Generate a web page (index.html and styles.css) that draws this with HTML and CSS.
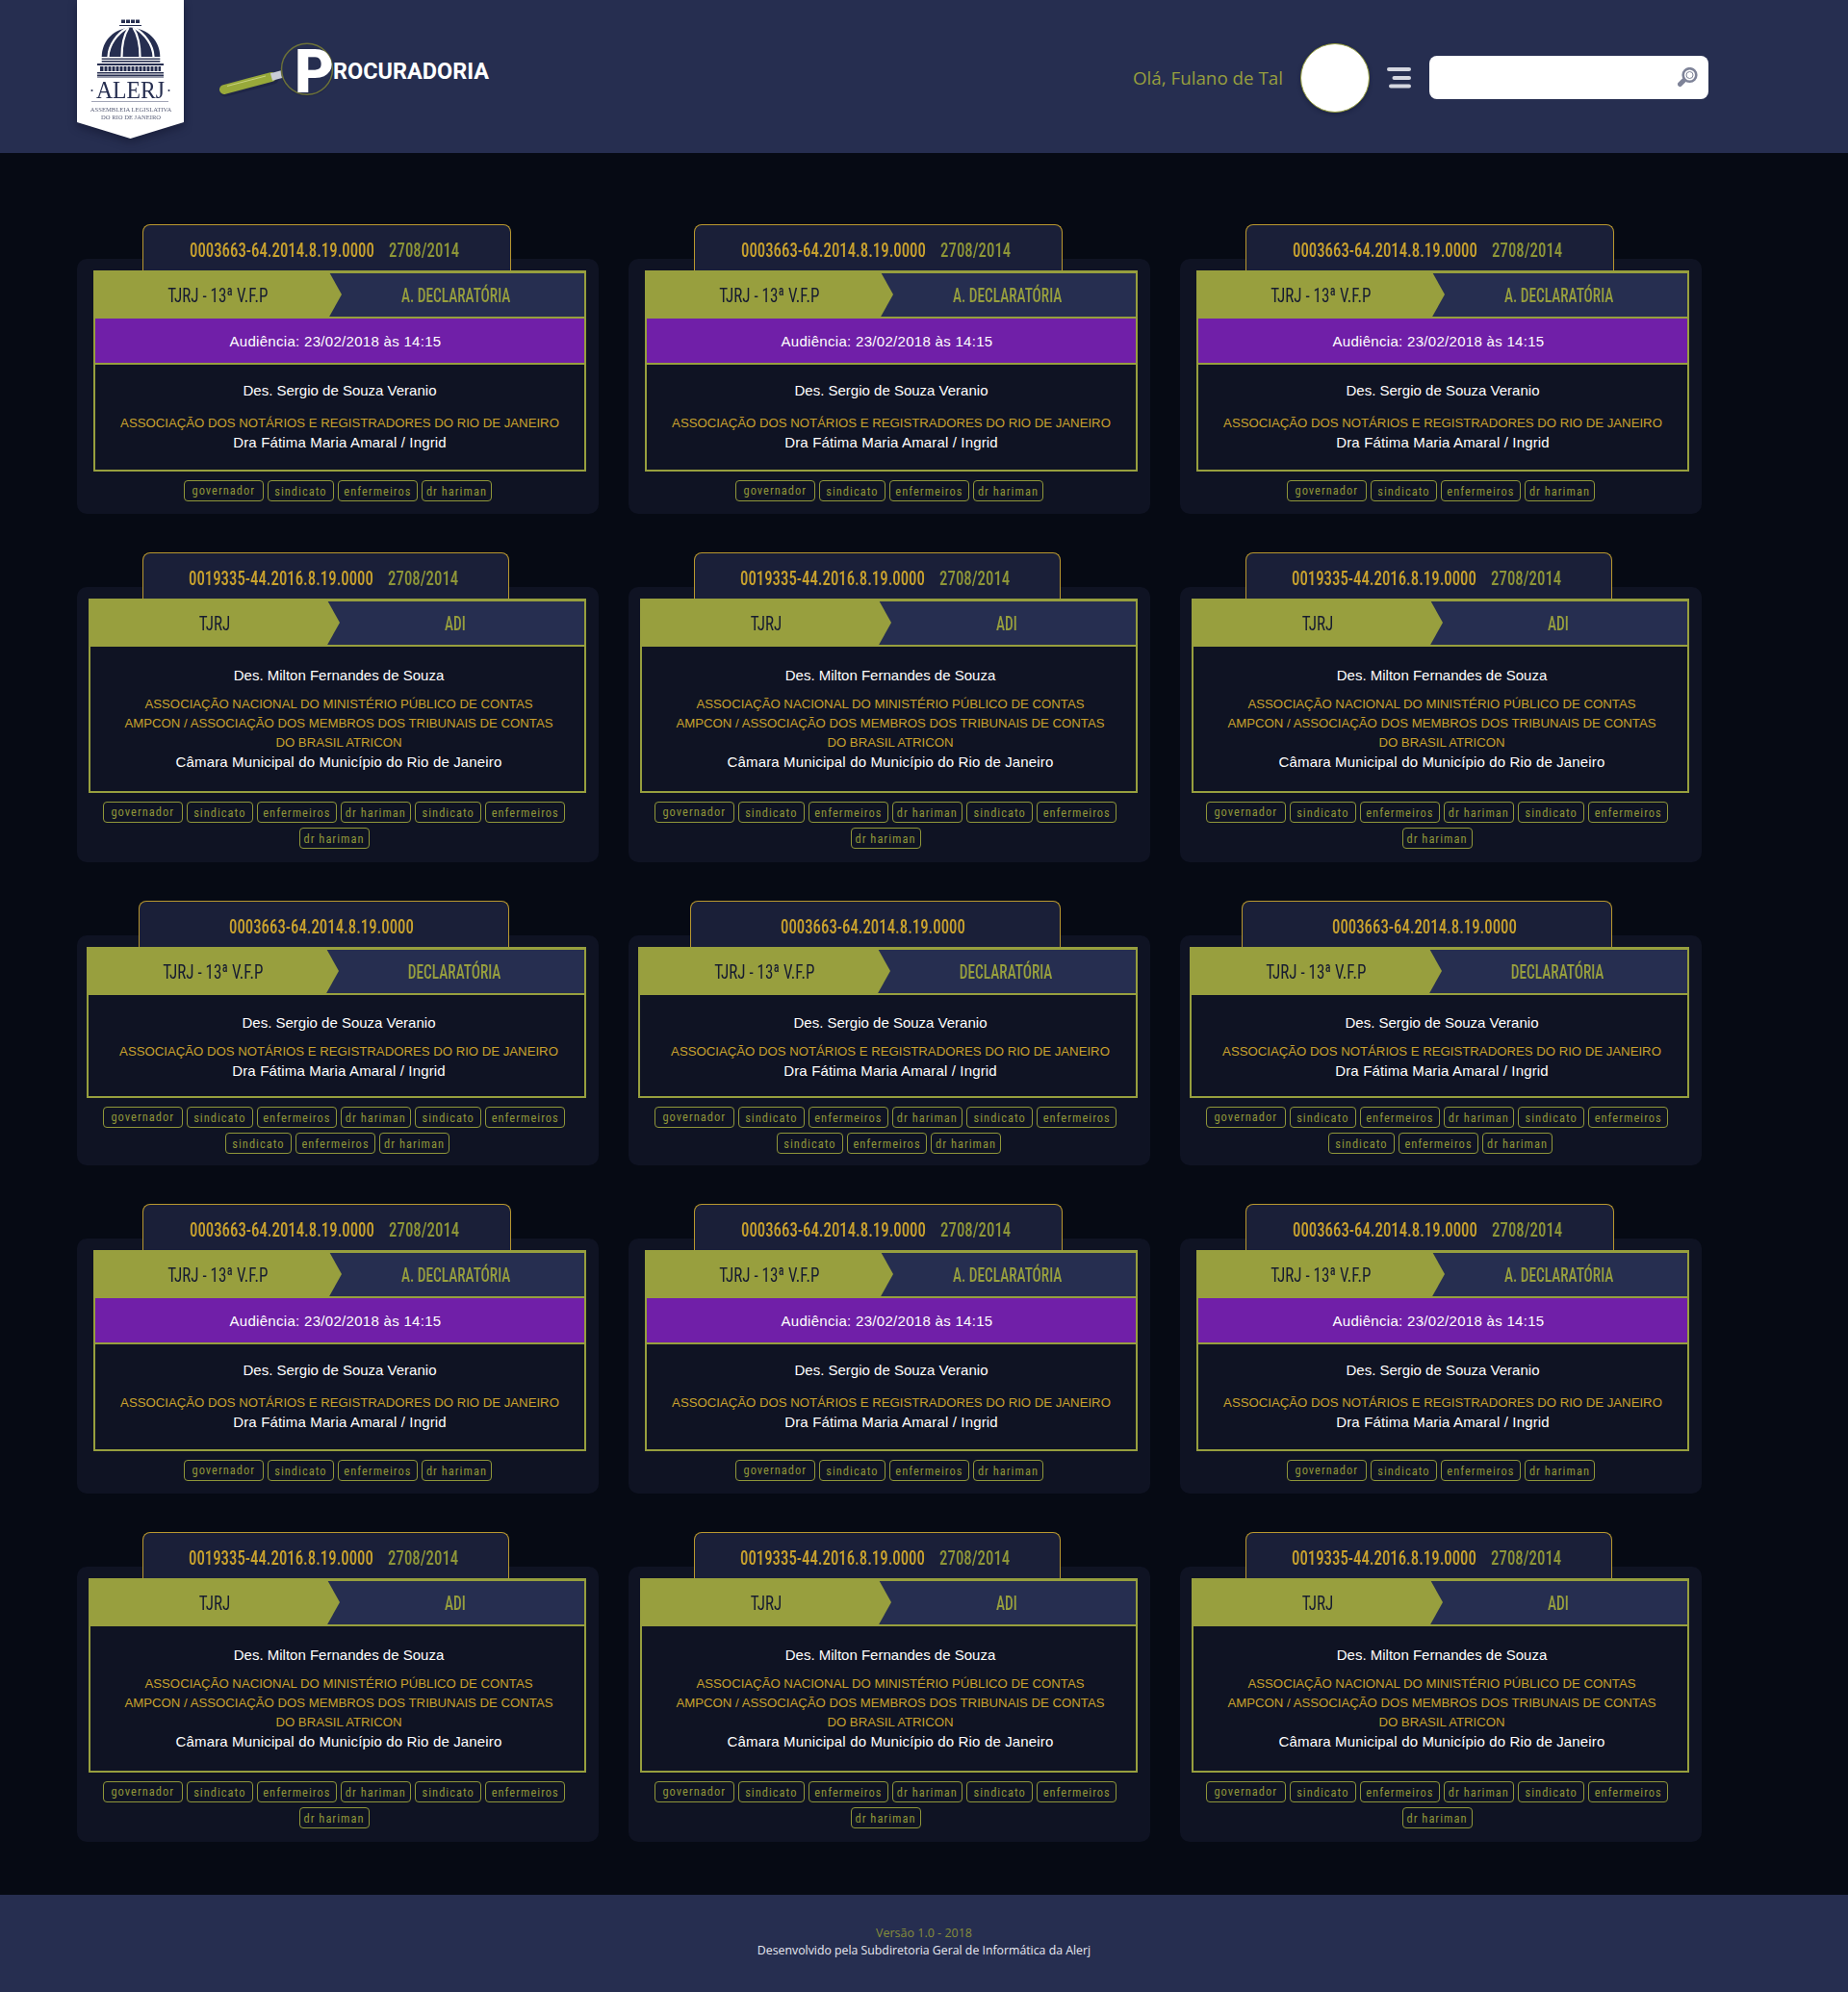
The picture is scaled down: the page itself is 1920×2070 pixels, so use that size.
FILE: index.html
```html
<!DOCTYPE html>
<html lang="pt-BR">
<head>
<meta charset="utf-8">
<title>Procuradoria</title>
<link rel="stylesheet" href="styles.css">
</head>
<body>
<header class="top">
  <div class="crest">
    <svg class="crest-art" viewBox="0 0 111 144" width="111" height="144">
      <g fill="#262e50">
        <rect x="46" y="20.500" width="4" height="3.500"/><rect x="51" y="20.500" width="4" height="3.500"/><rect x="56" y="20.500" width="4" height="3.500"/><rect x="61" y="20.500" width="4" height="3.500"/>
        <rect x="44" y="26" width="23" height="1"/>
        <path d="M25.700 59 C26 42 38 30 55.800 28.500 C74 30 86 42 86.300 59 Z"/>
        <rect x="25.700" y="60.500" width="60.600" height="1.400"/><rect x="25.700" y="63" width="60.600" height="1.600"/>
        <rect x="21" y="66" width="69" height="2"/>
        <rect x="24" y="69" width="63" height="5"/>
        <rect x="21" y="75" width="69" height="1.500"/><rect x="21" y="77.500" width="69" height="1.500"/><rect x="21" y="79.500" width="69" height="1"/>
      </g>
      <g fill="none" stroke="#fff" stroke-width="2.200">
        <path d="M32.500 59 C33 46 42 35 52 29"/>
        <path d="M46.500 59 C46.500 46 49 36 53.500 29"/>
        <path d="M65.500 59 C65.500 46 63 36 58.500 29"/>
        <path d="M79.500 59 C79 46 70 35 60 29"/>
      </g>
      <g stroke="#fff" stroke-width="1">
        <path d="M28 69V74M32 69V74M36 69V74M40 69V74M44 69V74M48 69V74M52 69V74M56 69V74M60 69V74M64 69V74M68 69V74M72 69V74M76 69V74M80 69V74M84 69V74"/>
      </g>
      <text class="crest-name" x="20" y="102" textLength="71" lengthAdjust="spacingAndGlyphs">ALERJ</text>
      <circle cx="15.500" cy="94" r="1" fill="#262e50"/><circle cx="95.500" cy="94" r="1" fill="#262e50"/>
      <rect x="15" y="105" width="80" height="0.800" fill="#8d90a5"/>
      <text class="crest-sub" x="56" y="116" text-anchor="middle">ASSEMBLEIA LEGISLATIVA</text>
      <text class="crest-sub" x="56" y="124" text-anchor="middle">DO RIO DE JANEIRO</text>
    </svg>
  </div>
  <svg class="brand" viewBox="0 0 300 75" width="300" height="75">
    <defs><clipPath id="lens"><circle cx="98" cy="36.700" r="26.500"/></clipPath></defs>
    <path d="M13 60 L63 47" stroke="#1b2240" stroke-width="11" stroke-linecap="round" opacity=".6"/>
    <path d="M12 58 L61 45" stroke="#98a93a" stroke-width="10" stroke-linecap="round"/>
    <path d="M15 54.500 L55 44" stroke="#c8d27e" stroke-width="1" fill="none"/>
    <path d="M61 45 L72 42" stroke="#c9ccd6" stroke-width="8"/>
    <circle cx="98" cy="37.700" r="27.500" fill="#1b2240" opacity=".5"/>
    <circle cx="98" cy="36.700" r="26.500" fill="#262e50" stroke="#6c7138" stroke-width="1.500"/>
    <text class="brand-p" x="85" y="61" clip-path="url(#lens)">P</text>
    <text class="brand-rest" x="125" y="46.700" textLength="162" lengthAdjust="spacingAndGlyphs">ROCURADORIA</text>
  </svg>
  <div class="user">
    <span class="hello">Olá, Fulano de Tal</span>
    <span class="avatar"></span>
    <svg class="menu" viewBox="0 0 25 22" width="25" height="22">
      <g fill="#d5d7e0"><rect x="0" y="0" width="25" height="4" rx="2"/><rect x="5.500" y="9" width="19.500" height="4" rx="2"/><rect x="2" y="17.500" width="23" height="4" rx="2"/></g>
    </svg>
    <div class="search">
      <svg viewBox="0 0 21 21" width="21" height="21">
        <path d="M6 14 L2.500 17.500" stroke="#7e8398" stroke-width="5" stroke-linecap="round"/>
        <circle cx="12.500" cy="8" r="6.800" fill="#fff" stroke="#7e8398" stroke-width="2.600"/>
        <circle cx="12.500" cy="8" r="3.500" fill="none" stroke="#7e8398" stroke-width="1"/>
      </svg>
    </div>
  </div>
</header>

<main class="grid">
  <!-- row 1 -->
  <article class="card v-a">
    <h2 class="tab"><span class="ids"><span class="num">0003663-64.2014.8.19.0000</span><span class="year">2708/2014</span></span></h2>
    <div class="head"><div class="court"><span>TJRJ - 13ª V.F.P</span></div><div class="kind"><span>A. DECLARATÓRIA</span></div></div>
    <div class="aud">Audiência: 23/02/2018 às 14:15</div>
    <div class="body"><p class="judge">Des. Sergio de Souza Veranio</p><p class="party">ASSOCIAÇÃO DOS NOTÁRIOS E REGISTRADORES DO RIO DE JANEIRO</p><p class="other">Dra Fátima Maria Amaral / Ingrid</p></div>
    <div class="tags"><div class="line"><a class="tag gov">governador</a><a class="tag sin">sindicato</a><a class="tag enf">enfermeiros</a><a class="tag dr">dr hariman</a></div></div>
  </article>
  <article class="card v-a">
    <h2 class="tab"><span class="ids"><span class="num">0003663-64.2014.8.19.0000</span><span class="year">2708/2014</span></span></h2>
    <div class="head"><div class="court"><span>TJRJ - 13ª V.F.P</span></div><div class="kind"><span>A. DECLARATÓRIA</span></div></div>
    <div class="aud">Audiência: 23/02/2018 às 14:15</div>
    <div class="body"><p class="judge">Des. Sergio de Souza Veranio</p><p class="party">ASSOCIAÇÃO DOS NOTÁRIOS E REGISTRADORES DO RIO DE JANEIRO</p><p class="other">Dra Fátima Maria Amaral / Ingrid</p></div>
    <div class="tags"><div class="line"><a class="tag gov">governador</a><a class="tag sin">sindicato</a><a class="tag enf">enfermeiros</a><a class="tag dr">dr hariman</a></div></div>
  </article>
  <article class="card v-a">
    <h2 class="tab"><span class="ids"><span class="num">0003663-64.2014.8.19.0000</span><span class="year">2708/2014</span></span></h2>
    <div class="head"><div class="court"><span>TJRJ - 13ª V.F.P</span></div><div class="kind"><span>A. DECLARATÓRIA</span></div></div>
    <div class="aud">Audiência: 23/02/2018 às 14:15</div>
    <div class="body"><p class="judge">Des. Sergio de Souza Veranio</p><p class="party">ASSOCIAÇÃO DOS NOTÁRIOS E REGISTRADORES DO RIO DE JANEIRO</p><p class="other">Dra Fátima Maria Amaral / Ingrid</p></div>
    <div class="tags"><div class="line"><a class="tag gov">governador</a><a class="tag sin">sindicato</a><a class="tag enf">enfermeiros</a><a class="tag dr">dr hariman</a></div></div>
  </article>
  <!-- row 2 -->
  <article class="card v-b">
    <h2 class="tab"><span class="ids"><span class="num">0019335-44.2016.8.19.0000</span><span class="year">2708/2014</span></span></h2>
    <div class="head"><div class="court"><span>TJRJ</span></div><div class="kind"><span>ADI</span></div></div>
    <div class="body"><p class="judge">Des. Milton Fernandes de Souza</p><p class="party">ASSOCIAÇÃO NACIONAL DO MINISTÉRIO PÚBLICO DE CONTAS<br>AMPCON / ASSOCIAÇÃO DOS MEMBROS DOS TRIBUNAIS DE CONTAS<br>DO BRASIL ATRICON</p><p class="other">Câmara Municipal do Município do Rio de Janeiro</p></div>
    <div class="tags"><div class="line shift"><a class="tag gov">governador</a><a class="tag sin">sindicato</a><a class="tag enf">enfermeiros</a><a class="tag dr">dr hariman</a><a class="tag sin">sindicato</a><a class="tag enf">enfermeiros</a></div><div class="line shift"><a class="tag dr">dr hariman</a></div></div>
  </article>
  <article class="card v-b">
    <h2 class="tab"><span class="ids"><span class="num">0019335-44.2016.8.19.0000</span><span class="year">2708/2014</span></span></h2>
    <div class="head"><div class="court"><span>TJRJ</span></div><div class="kind"><span>ADI</span></div></div>
    <div class="body"><p class="judge">Des. Milton Fernandes de Souza</p><p class="party">ASSOCIAÇÃO NACIONAL DO MINISTÉRIO PÚBLICO DE CONTAS<br>AMPCON / ASSOCIAÇÃO DOS MEMBROS DOS TRIBUNAIS DE CONTAS<br>DO BRASIL ATRICON</p><p class="other">Câmara Municipal do Município do Rio de Janeiro</p></div>
    <div class="tags"><div class="line shift"><a class="tag gov">governador</a><a class="tag sin">sindicato</a><a class="tag enf">enfermeiros</a><a class="tag dr">dr hariman</a><a class="tag sin">sindicato</a><a class="tag enf">enfermeiros</a></div><div class="line shift"><a class="tag dr">dr hariman</a></div></div>
  </article>
  <article class="card v-b">
    <h2 class="tab"><span class="ids"><span class="num">0019335-44.2016.8.19.0000</span><span class="year">2708/2014</span></span></h2>
    <div class="head"><div class="court"><span>TJRJ</span></div><div class="kind"><span>ADI</span></div></div>
    <div class="body"><p class="judge">Des. Milton Fernandes de Souza</p><p class="party">ASSOCIAÇÃO NACIONAL DO MINISTÉRIO PÚBLICO DE CONTAS<br>AMPCON / ASSOCIAÇÃO DOS MEMBROS DOS TRIBUNAIS DE CONTAS<br>DO BRASIL ATRICON</p><p class="other">Câmara Municipal do Município do Rio de Janeiro</p></div>
    <div class="tags"><div class="line shift"><a class="tag gov">governador</a><a class="tag sin">sindicato</a><a class="tag enf">enfermeiros</a><a class="tag dr">dr hariman</a><a class="tag sin">sindicato</a><a class="tag enf">enfermeiros</a></div><div class="line shift"><a class="tag dr">dr hariman</a></div></div>
  </article>
  <!-- row 3 -->
  <article class="card v-c">
    <h2 class="tab"><span class="ids"><span class="num">0003663-64.2014.8.19.0000</span></span></h2>
    <div class="head"><div class="court"><span>TJRJ - 13ª V.F.P</span></div><div class="kind"><span>DECLARATÓRIA</span></div></div>
    <div class="body"><p class="judge">Des. Sergio de Souza Veranio</p><p class="party">ASSOCIAÇÃO DOS NOTÁRIOS E REGISTRADORES DO RIO DE JANEIRO</p><p class="other">Dra Fátima Maria Amaral / Ingrid</p></div>
    <div class="tags"><div class="line shift"><a class="tag gov">governador</a><a class="tag sin">sindicato</a><a class="tag enf">enfermeiros</a><a class="tag dr">dr hariman</a><a class="tag sin">sindicato</a><a class="tag enf">enfermeiros</a></div><div class="line"><a class="tag sin">sindicato</a><a class="tag enf">enfermeiros</a><a class="tag dr">dr hariman</a></div></div>
  </article>
  <article class="card v-c">
    <h2 class="tab"><span class="ids"><span class="num">0003663-64.2014.8.19.0000</span></span></h2>
    <div class="head"><div class="court"><span>TJRJ - 13ª V.F.P</span></div><div class="kind"><span>DECLARATÓRIA</span></div></div>
    <div class="body"><p class="judge">Des. Sergio de Souza Veranio</p><p class="party">ASSOCIAÇÃO DOS NOTÁRIOS E REGISTRADORES DO RIO DE JANEIRO</p><p class="other">Dra Fátima Maria Amaral / Ingrid</p></div>
    <div class="tags"><div class="line shift"><a class="tag gov">governador</a><a class="tag sin">sindicato</a><a class="tag enf">enfermeiros</a><a class="tag dr">dr hariman</a><a class="tag sin">sindicato</a><a class="tag enf">enfermeiros</a></div><div class="line"><a class="tag sin">sindicato</a><a class="tag enf">enfermeiros</a><a class="tag dr">dr hariman</a></div></div>
  </article>
  <article class="card v-c">
    <h2 class="tab"><span class="ids"><span class="num">0003663-64.2014.8.19.0000</span></span></h2>
    <div class="head"><div class="court"><span>TJRJ - 13ª V.F.P</span></div><div class="kind"><span>DECLARATÓRIA</span></div></div>
    <div class="body"><p class="judge">Des. Sergio de Souza Veranio</p><p class="party">ASSOCIAÇÃO DOS NOTÁRIOS E REGISTRADORES DO RIO DE JANEIRO</p><p class="other">Dra Fátima Maria Amaral / Ingrid</p></div>
    <div class="tags"><div class="line shift"><a class="tag gov">governador</a><a class="tag sin">sindicato</a><a class="tag enf">enfermeiros</a><a class="tag dr">dr hariman</a><a class="tag sin">sindicato</a><a class="tag enf">enfermeiros</a></div><div class="line"><a class="tag sin">sindicato</a><a class="tag enf">enfermeiros</a><a class="tag dr">dr hariman</a></div></div>
  </article>
  <!-- row 4 -->
  <article class="card v-a">
    <h2 class="tab"><span class="ids"><span class="num">0003663-64.2014.8.19.0000</span><span class="year">2708/2014</span></span></h2>
    <div class="head"><div class="court"><span>TJRJ - 13ª V.F.P</span></div><div class="kind"><span>A. DECLARATÓRIA</span></div></div>
    <div class="aud">Audiência: 23/02/2018 às 14:15</div>
    <div class="body"><p class="judge">Des. Sergio de Souza Veranio</p><p class="party">ASSOCIAÇÃO DOS NOTÁRIOS E REGISTRADORES DO RIO DE JANEIRO</p><p class="other">Dra Fátima Maria Amaral / Ingrid</p></div>
    <div class="tags"><div class="line"><a class="tag gov">governador</a><a class="tag sin">sindicato</a><a class="tag enf">enfermeiros</a><a class="tag dr">dr hariman</a></div></div>
  </article>
  <article class="card v-a">
    <h2 class="tab"><span class="ids"><span class="num">0003663-64.2014.8.19.0000</span><span class="year">2708/2014</span></span></h2>
    <div class="head"><div class="court"><span>TJRJ - 13ª V.F.P</span></div><div class="kind"><span>A. DECLARATÓRIA</span></div></div>
    <div class="aud">Audiência: 23/02/2018 às 14:15</div>
    <div class="body"><p class="judge">Des. Sergio de Souza Veranio</p><p class="party">ASSOCIAÇÃO DOS NOTÁRIOS E REGISTRADORES DO RIO DE JANEIRO</p><p class="other">Dra Fátima Maria Amaral / Ingrid</p></div>
    <div class="tags"><div class="line"><a class="tag gov">governador</a><a class="tag sin">sindicato</a><a class="tag enf">enfermeiros</a><a class="tag dr">dr hariman</a></div></div>
  </article>
  <article class="card v-a">
    <h2 class="tab"><span class="ids"><span class="num">0003663-64.2014.8.19.0000</span><span class="year">2708/2014</span></span></h2>
    <div class="head"><div class="court"><span>TJRJ - 13ª V.F.P</span></div><div class="kind"><span>A. DECLARATÓRIA</span></div></div>
    <div class="aud">Audiência: 23/02/2018 às 14:15</div>
    <div class="body"><p class="judge">Des. Sergio de Souza Veranio</p><p class="party">ASSOCIAÇÃO DOS NOTÁRIOS E REGISTRADORES DO RIO DE JANEIRO</p><p class="other">Dra Fátima Maria Amaral / Ingrid</p></div>
    <div class="tags"><div class="line"><a class="tag gov">governador</a><a class="tag sin">sindicato</a><a class="tag enf">enfermeiros</a><a class="tag dr">dr hariman</a></div></div>
  </article>
  <!-- row 5 -->
  <article class="card v-b">
    <h2 class="tab"><span class="ids"><span class="num">0019335-44.2016.8.19.0000</span><span class="year">2708/2014</span></span></h2>
    <div class="head"><div class="court"><span>TJRJ</span></div><div class="kind"><span>ADI</span></div></div>
    <div class="body"><p class="judge">Des. Milton Fernandes de Souza</p><p class="party">ASSOCIAÇÃO NACIONAL DO MINISTÉRIO PÚBLICO DE CONTAS<br>AMPCON / ASSOCIAÇÃO DOS MEMBROS DOS TRIBUNAIS DE CONTAS<br>DO BRASIL ATRICON</p><p class="other">Câmara Municipal do Município do Rio de Janeiro</p></div>
    <div class="tags"><div class="line shift"><a class="tag gov">governador</a><a class="tag sin">sindicato</a><a class="tag enf">enfermeiros</a><a class="tag dr">dr hariman</a><a class="tag sin">sindicato</a><a class="tag enf">enfermeiros</a></div><div class="line shift"><a class="tag dr">dr hariman</a></div></div>
  </article>
  <article class="card v-b">
    <h2 class="tab"><span class="ids"><span class="num">0019335-44.2016.8.19.0000</span><span class="year">2708/2014</span></span></h2>
    <div class="head"><div class="court"><span>TJRJ</span></div><div class="kind"><span>ADI</span></div></div>
    <div class="body"><p class="judge">Des. Milton Fernandes de Souza</p><p class="party">ASSOCIAÇÃO NACIONAL DO MINISTÉRIO PÚBLICO DE CONTAS<br>AMPCON / ASSOCIAÇÃO DOS MEMBROS DOS TRIBUNAIS DE CONTAS<br>DO BRASIL ATRICON</p><p class="other">Câmara Municipal do Município do Rio de Janeiro</p></div>
    <div class="tags"><div class="line shift"><a class="tag gov">governador</a><a class="tag sin">sindicato</a><a class="tag enf">enfermeiros</a><a class="tag dr">dr hariman</a><a class="tag sin">sindicato</a><a class="tag enf">enfermeiros</a></div><div class="line shift"><a class="tag dr">dr hariman</a></div></div>
  </article>
  <article class="card v-b">
    <h2 class="tab"><span class="ids"><span class="num">0019335-44.2016.8.19.0000</span><span class="year">2708/2014</span></span></h2>
    <div class="head"><div class="court"><span>TJRJ</span></div><div class="kind"><span>ADI</span></div></div>
    <div class="body"><p class="judge">Des. Milton Fernandes de Souza</p><p class="party">ASSOCIAÇÃO NACIONAL DO MINISTÉRIO PÚBLICO DE CONTAS<br>AMPCON / ASSOCIAÇÃO DOS MEMBROS DOS TRIBUNAIS DE CONTAS<br>DO BRASIL ATRICON</p><p class="other">Câmara Municipal do Município do Rio de Janeiro</p></div>
    <div class="tags"><div class="line shift"><a class="tag gov">governador</a><a class="tag sin">sindicato</a><a class="tag enf">enfermeiros</a><a class="tag dr">dr hariman</a><a class="tag sin">sindicato</a><a class="tag enf">enfermeiros</a></div><div class="line shift"><a class="tag dr">dr hariman</a></div></div>
  </article>
</main>

<footer class="foot">
  <p class="ver">Versão 1.0 - 2018</p>
  <p class="dev">Desenvolvido pela Subdiretoria Geral de Informática da Alerj</p>
</footer>
</body>
</html>
```
FILE: styles.css
```css
* { box-sizing: border-box; }
html, body { margin: 0; padding: 0; }
body { background: #060a14; font-family: "Liberation Sans", Arial, sans-serif; color: #fff; width: 1920px; }
p, h2 { margin: 0; font-weight: normal; }

.top { height: 159px; background: #262e50; display: flex; align-items: center; padding: 0 145px 0 80px; }
.crest { width: 111px; height: 144px; align-self: flex-start; filter: drop-shadow(0 4px 5px rgba(10, 14, 35, .45)); flex: none; }
.crest-art { display: block; background: #fff; clip-path: polygon(0 0, 100% 0, 100% 127px, 50% 144px, 0 127px); }
.crest-name { font-family: "Liberation Serif", serif; font-size: 25px; fill: #262e50; }
.crest-sub { font-family: "Liberation Serif", serif; font-size: 6.600px; fill: #5b6079; }
.brand { margin: 0 0 14px 30px; flex: none; }
.brand-p { font-family: Roboto, sans-serif; font-weight: 900; font-size: 63px; fill: #fff; }
.brand-rest { font-family: Roboto, sans-serif; font-weight: 700; font-size: 23.500px; fill: #fff; }
.user { margin-left: auto; display: flex; align-items: center; margin-top: 2px; }
.hello { font-family: "Open Sans", sans-serif; font-size: 18.800px; color: #979f3e; }
.avatar { width: 72px; height: 72px; border-radius: 50%; background: #fff; border: 1.500px solid #979f3e; margin-left: 18px; box-shadow: 0 2px 4px rgba(10, 14, 35, .3); }
.menu { margin-left: 18px; }
.search { width: 290px; height: 45px; margin-left: 19px; background: #fff; border-radius: 8px; display: flex; align-items: center; justify-content: flex-end; padding-right: 11px; }

.grid { display: grid; grid-template-columns: repeat(3, 542px); column-gap: 31px; row-gap: 40px; align-items: start; padding: 74px 0 55px 80px; }
.card { margin-top: 36px; background: #0f1323; border-radius: 10px; padding: 12px 13px 13px 17px; }
.tab { height: 48px; margin: -48px 0 0 51px; width: 383px; background: #1a1f38; border: 1px solid #b9982f; border-bottom: 0; border-radius: 8px 8px 0 0; display: flex; align-items: center; justify-content: center; padding: 5px 5px 0 0; white-space: nowrap; }
.ids { display: inline-flex; gap: 19px; transform: scaleX(.8); }
.num, .year, .court span, .kind span { font-family: "Roboto Condensed", Roboto, sans-serif; font-stretch: 75%; display: inline-block; white-space: nowrap; }
.num { font-size: 21px; font-weight: 500; color: #c9a22e; }
.year { font-size: 21px; font-weight: 500; color: #8e9638; }

.head { display: flex; height: 50px; }
.court { width: 258px; flex: none; background: #989f3e; color: #161b30; font-size: 21px; display: flex; align-items: center; justify-content: center; padding-top: 2px; clip-path: polygon(0 0, calc(100% - 14px) 0, 100% 50%, calc(100% - 14px) 100%, 0 100%); position: relative; z-index: 1; }
.court span { transform: scaleX(.81); }
.kind { flex: 1; margin-left: -14px; background: #262e50; border: solid #979f3e; border-width: 3px 2px 2px 0; color: #979f3e; font-size: 21px; font-weight: 500; display: flex; align-items: center; justify-content: center; padding-top: 1px; }
.kind span { transform: scaleX(.73); }
.aud { height: 48px; background: #701fa8; border: solid #979f3e; border-width: 0 2px 2px; display: flex; align-items: center; justify-content: center; font-size: 15px; letter-spacing: .3px; padding-right: 9px; }
.body { border: solid #979f3e; border-width: 0 2px 2px; padding: 17px 10px 18px; text-align: center; font-size: 15px; line-height: 20px; }
.other { letter-spacing: .15px; }
.party { color: #c9a22e; margin-top: 14px; font-size: 13.200px; }
.tags { margin-top: 9px; display: flex; flex-direction: column; gap: 5px; }
.line { display: flex; justify-content: center; gap: 4.300px; padding-right: 4px; }
.tag { height: 22px; border: 1px solid #8f9639; border-radius: 4px; font-family: "Roboto Condensed", Roboto, sans-serif; font-stretch: 75%; font-size: 12.500px; letter-spacing: 1px; color: #8f9639; display: flex; align-items: center; justify-content: center; }
.gov { width: 82.500px; padding-bottom: 2px; }
.sin { width: 69px; }
.enf { width: 82.500px; }
.dr { width: 73px; }

.v-b { padding: 12px 13px 14px 12px; }
.v-b .tab { margin-left: 56px; width: 381px; }
.v-b .court { width: 261px; }
.v-b .body { padding: 20px 10px 20px 13px; }
.v-b .party { margin-top: 10px; }
.v-b .line.shift { padding-right: 7px; }
.v-c { padding: 12px 13px 12px 10px; }
.v-c .tab { margin-left: 54px; width: 385px; }
.v-c .court { width: 262px; }
.v-c .body { padding: 19px 10px 16px 15px; }
.v-c .party { margin-top: 10px; }
.v-c .line { padding: 0 0 0 2px; }
.v-c .line.shift { padding: 0 5px 0 0; }

.foot { height: 102px; background: #262e50; padding-top: 31px; text-align: center; font-family: "Open Sans", sans-serif; font-size: 12.500px; line-height: 17.500px; }
.ver { color: #868d3a; }
.dev { color: #e8e9f0; font-size: 12.300px; }
```
